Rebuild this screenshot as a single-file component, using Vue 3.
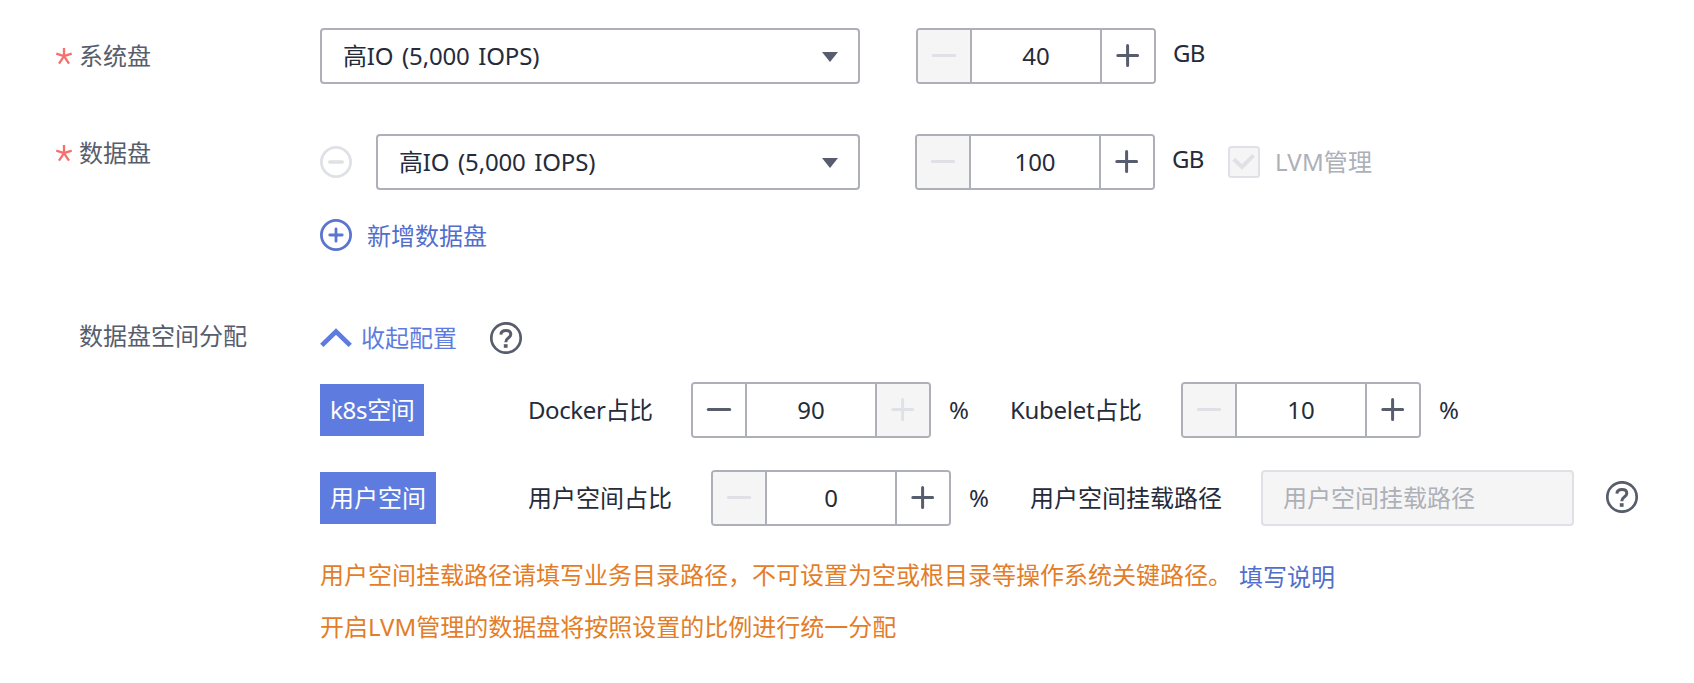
<script setup>
import { h, ref } from 'vue'

const systemDisk = ref(40)
const dataDisk = ref(100)
const docker = ref(90)
const kubelet = ref(10)
const userSpace = ref(0)

const MinusIcon = () =>
  h('svg', { width: 26, height: 26, viewBox: '0 0 26 26' }, [
    h('path', { d: 'M2.3 12.5H23.7', stroke: 'currentColor', 'stroke-width': 3, 'stroke-linecap': 'round' }),
  ])

const PlusIcon = () =>
  h('svg', { width: 26, height: 26, viewBox: '0 0 26 26' }, [
    h('path', { d: 'M2.8 12.5H22.6M12.6 2.6V22.4', stroke: 'currentColor', 'stroke-width': 3, 'stroke-linecap': 'round' }),
  ])

const Stepper = (props) =>
  h('div', { class: 'stepper' }, [
    h('button', { class: ['step', { off: props.min }], type: 'button' }, [h(MinusIcon)]),
    h('span', { class: 'num' }, String(props.value)),
    h('button', { class: ['step', { off: props.max }], type: 'button' }, [h(PlusIcon)]),
  ])
Stepper.props = { value: Number, min: Boolean, max: Boolean }

const HelpIcon = () =>
  h('svg', { class: 'help', width: 32, height: 32, viewBox: '0 0 32 32', fill: 'none', stroke: 'currentColor' }, [
    h('circle', { cx: 16, cy: 16, r: 14.7, 'stroke-width': 2.7 }),
    h('path', { d: 'M10.9 12.6C11 10 13 8.5 16 8.5C19 8.5 20.8 10.1 20.8 12.3C20.8 14.1 19.9 14.9 18.3 16C16.4 17.3 15.8 18 15.8 20.2', 'stroke-width': 3 }),
    h('path', { d: 'M15.7 22.2V25.8', 'stroke-width': 3.8 }),
  ])

const Asterisk = () =>
  h('svg', { class: 'asterisk', width: 16, height: 17, viewBox: '0 0 16 17' }, [
    h('path', { d: 'M8 8.2V0M8 8.2L0.3 5.7M8 8.2L15.7 5.7M8 8.2L3 15.6M8 8.2L13 15.6', stroke: 'currentColor', 'stroke-width': 2.3 }),
  ])
</script>

<template>
  <main class="form">
    <section class="row system">
      <div class="label"><Asterisk /><span>系统盘</span></div>
      <div class="select">
        <span>高IO (5,000 IOPS)</span>
        <svg width="16" height="10" viewBox="0 0 16 10"><path d="M0 0H16L8 10Z" fill="#575d6c" /></svg>
      </div>
      <Stepper class="first" :value="systemDisk" min />
      <span class="unit">GB</span>
    </section>

    <section class="row data">
      <div class="label raised"><Asterisk /><span>数据盘</span></div>
      <svg class="remove" width="32" height="32" viewBox="0 0 32 32" fill="none" stroke="currentColor">
        <circle cx="16" cy="16" r="14.6" stroke-width="2.8" />
        <path d="M9.8 16H22.2" stroke-width="3.6" stroke-linecap="round" />
      </svg>
      <div class="select short">
        <span>高IO (5,000 IOPS)</span>
        <svg width="16" height="10" viewBox="0 0 16 10"><path d="M0 0H16L8 10Z" fill="#575d6c" /></svg>
      </div>
      <Stepper class="second" :value="dataDisk" min />
      <span class="unit">GB</span>
      <div class="check">
        <svg width="32" height="32" viewBox="0 0 32 32">
          <rect x="1" y="1" width="30" height="30" rx="2.5" fill="#f5f5f5" stroke="#dfe1e6" stroke-width="2" />
          <path d="M5.8 13.2L14 21L25.6 9.4" fill="none" stroke="#dfe1e6" stroke-width="4" />
        </svg>
        <span>LVM管理</span>
      </div>
    </section>

    <div class="row add">
      <svg width="32" height="32" viewBox="0 0 32 32" fill="none" stroke="#5b75cf">
        <circle cx="16" cy="16" r="14.6" stroke-width="2.8" />
        <path d="M9.8 16H22.2M16 9.8V22.2" stroke-width="2.8" stroke-linecap="round" />
      </svg>
      <span>新增数据盘</span>
    </div>

    <section class="row collapse">
      <div class="label">
        <span>数据盘空间分配</span>
      </div>
      <div class="toggle">
        <svg width="32" height="20" viewBox="0 0 32 20"><path d="M1.8 17.4L16 3.6L30.2 17.4" fill="none" stroke="#5e7ce0" stroke-width="4.8" /></svg>
        <span>收起配置</span>
      </div>
      <HelpIcon />
    </section>

    <section class="row space">
      <div class="tagcell"><span class="tag k8s">k8s空间</span></div>
      <span class="name docker">Docker占比</span>
      <Stepper :value="docker" max />
      <span class="percent">%</span>
      <span class="name kubelet">Kubelet占比</span>
      <Stepper :value="kubelet" min />
      <span class="percent">%</span>
    </section>

    <section class="row space user">
      <div class="tagcell"><span class="tag">用户空间</span></div>
      <span class="name share">用户空间占比</span>
      <Stepper :value="userSpace" min />
      <span class="percent">%</span>
      <span class="name path">用户空间挂载路径</span>
      <div class="input">用户空间挂载路径</div>
      <HelpIcon class="lifted" />
    </section>

    <div class="row note">
      <span>用户空间挂载路径请填写业务目录路径，不可设置为空或根目录等操作系统关键路径。</span>
      <a>填写说明</a>
    </div>
    <div class="row note last"><span>开启LVM管理的数据盘将按照设置的比例进行统一分配</span></div>
  </main>
</template>

<style>
body {
  background: #fff;
}
.stepper {
  box-sizing: border-box;
  display: flex;
  flex: none;
  width: 240px;
  height: 56px;
  border: 2px solid #adb0b8;
  border-radius: 4px;
  overflow: hidden;
}
.stepper .step {
  display: flex;
  align-items: center;
  justify-content: center;
  width: 52px;
  padding: 0;
  border: 0;
  background: #fff;
  color: #575d6c;
}
.stepper .step.off {
  background: #f5f5f5;
  color: #dfe1e6;
}
.stepper .num {
  width: 128px;
  border: solid #adb0b8;
  border-width: 0 2px;
  line-height: 52px;
  text-align: center;
}
.help {
  flex: none;
  color: #575d6c;
}
.help.lifted {
  margin-bottom: 2px;
}
.asterisk {
  flex: none;
  color: #f66f6a;
}
</style>

<style scoped>
.form {
  box-sizing: border-box;
  width: 1694px;
  height: 683px;
  padding: 28px 0 0 56px;
  overflow: hidden;
  background: #fff;
  color: #252b3a;
  font: 24px/32px "Noto Sans", "Noto Sans CJK SC", sans-serif;
  white-space: nowrap;
}
.row {
  display: flex;
  align-items: center;
  height: 56px;
}
.label {
  display: flex;
  flex: none;
  align-items: center;
  gap: 7px;
  width: 264px;
  color: #575d6c;
}
.label.raised {
  padding-bottom: 18px;
}
.select {
  box-sizing: border-box;
  display: flex;
  flex: none;
  align-items: center;
  justify-content: space-between;
  width: 540px;
  height: 56px;
  padding: 0 20px 0 21px;
  border: 2px solid #adb0b8;
  border-radius: 4px;
}
.select span {
  letter-spacing: -0.15px;
  word-spacing: 2.5px;
}
.select svg {
  margin-top: 2px;
}
.select.short {
  width: 484px;
  margin-left: 24px;
}
.first {
  margin-left: 56px;
}
.second {
  margin-left: 55px;
}
.unit {
  width: 55px;
  margin-left: 17px;
  padding-bottom: 7px;
  letter-spacing: -0.6px;
}
.data {
  margin-top: 50px;
}
.remove {
  color: #dfe1e6;
}
.check {
  display: flex;
  align-items: center;
  gap: 15px;
  margin-left: 1px;
  color: #adb0b8;
}
.check span {
  letter-spacing: 0.2px;
}
.add {
  height: 32px;
  margin: 29px 0 0 264px;
  gap: 15px;
  color: #526ecc;
}
.add span {
  padding-top: 1px;
}
.collapse {
  height: 32px;
  margin-top: 71px;
}
.collapse .label {
  box-sizing: border-box;
  padding: 0 0 5px 23px;
}
.toggle {
  display: flex;
  align-items: center;
  gap: 9px;
  width: 169.5px;
  color: #5e7ce0;
}
.space {
  margin: 28px 0 0 264px;
}
.user {
  margin-top: 32px;
}
.tagcell {
  display: flex;
  flex: none;
  width: 208px;
}
.tag {
  box-sizing: border-box;
  width: 116px;
  padding: 10px;
  background: #5e7ce0;
  color: #fff;
}
.tag.k8s {
  width: 104px;
  letter-spacing: -0.3px;
}
.name {
  flex: none;
}
.docker {
  width: 163px;
  letter-spacing: -0.4px;
}
.percent {
  flex: none;
  width: 61px;
  margin-left: 18px;
}
.kubelet {
  width: 171px;
  letter-spacing: -0.3px;
}
.share {
  width: 183px;
}
.path {
  width: 231px;
}
.input {
  box-sizing: border-box;
  flex: none;
  width: 313px;
  height: 56px;
  margin-right: 32px;
  padding-left: 20px;
  border: 2px solid #dfe1e6;
  border-radius: 4px;
  background: #f5f5f5;
  color: #adb0b8;
  line-height: 52px;
}
.note {
  height: 32px;
  margin: 33px 0 0 264px;
  color: #e37d29;
}
.note a {
  margin-left: 7px;
  padding-top: 4px;
  color: #526ecc;
}
.last {
  margin-top: 20px;
}
</style>
